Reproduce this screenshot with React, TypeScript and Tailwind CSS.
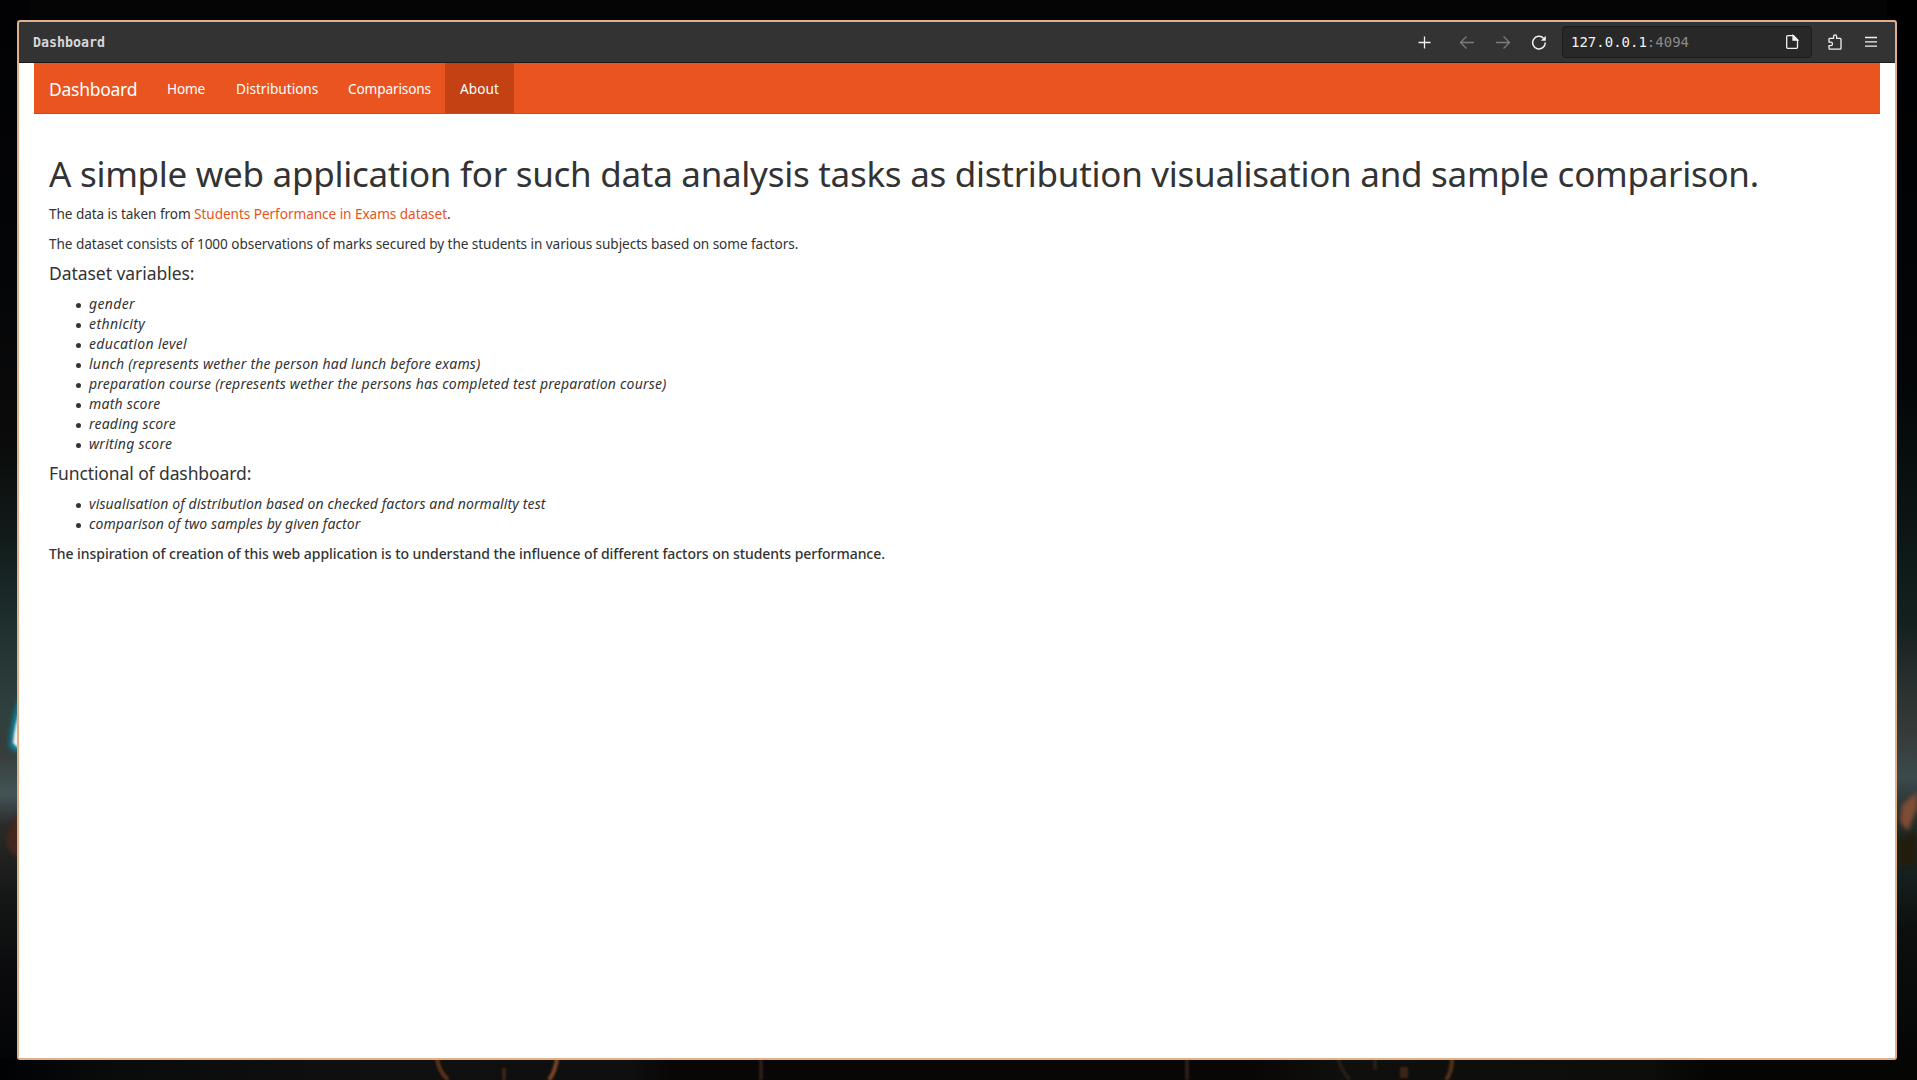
import type { ReactNode } from "react";

const variables = [
  { text: "gender", tracking: "tracking-[0.35px]" },
  { text: "ethnicity", tracking: "tracking-[0.41px]" },
  { text: "education level", tracking: "tracking-[0.35px]" },
  { text: "lunch (represents wether the person had lunch before exams)", tracking: "tracking-[0.21px]" },
  {
    text: "preparation course (represents wether the persons has completed test preparation course)",
    tracking: "tracking-[0.21px]",
  },
  { text: "math score", tracking: "tracking-[0.23px]" },
  { text: "reading score", tracking: "tracking-[0.2px]" },
  { text: "writing score", tracking: "tracking-[0.25px]" },
];

const features = [
  { text: "visualisation of distribution based on checked factors and normality test", tracking: "tracking-[0.13px]" },
  { text: "comparison of two samples by given factor", tracking: "tracking-[0.13px]" },
];

const links = [
  { text: "Home", box: "w-[68px] tracking-[-0.17px]" },
  { text: "Distributions", box: "w-28" },
  { text: "Comparisons", box: "w-28 tracking-[-0.12px]" },
  { text: "About", box: "w-[69px] bg-[#c34113] tracking-[0.08px]" },
];

/* Blurred desktop wallpaper visible around the window. */
function Wallpaper() {
  return (
    <svg className="absolute inset-0 h-full w-full" viewBox="0 0 1917 1080" preserveAspectRatio="none" aria-hidden="true">
      <defs>
        <linearGradient id="left" x1="0" y1="0" x2="0" y2="1">
          <stop offset="0" stopColor="#020204" />
          <stop offset=".25" stopColor="#040507" />
          <stop offset=".41" stopColor="#0b0b0b" />
          <stop offset=".5" stopColor="#111b1a" />
          <stop offset=".58" stopColor="#1f302f" />
          <stop offset=".66" stopColor="#30403e" />
          <stop offset=".7" stopColor="#373e3c" />
          <stop offset=".735" stopColor="#435457" />
          <stop offset=".765" stopColor="#2a2a28" />
          <stop offset=".83" stopColor="#151716" />
          <stop offset=".9" stopColor="#0b0b0d" />
          <stop offset="1" stopColor="#020305" />
        </linearGradient>
        <linearGradient id="right" x1="0" y1="0" x2="0" y2="1">
          <stop offset="0" stopColor="#000001" />
          <stop offset=".35" stopColor="#030506" />
          <stop offset=".5" stopColor="#0c1716" />
          <stop offset=".58" stopColor="#15211f" />
          <stop offset=".64" stopColor="#2a3230" />
          <stop offset=".68" stopColor="#363b39" />
          <stop offset=".72" stopColor="#3b4a4b" />
          <stop offset=".76" stopColor="#262b27" />
          <stop offset=".81" stopColor="#14201d" />
          <stop offset=".86" stopColor="#0d0f0f" />
          <stop offset="1" stopColor="#030304" />
        </linearGradient>
        <linearGradient id="bottom" x1="0" y1="0" x2="1" y2="0">
          <stop offset="0" stopColor="#010204" />
          <stop offset=".06" stopColor="#0a0b0b" />
          <stop offset=".2" stopColor="#0f100f" />
          <stop offset=".33" stopColor="#0e0f0e" />
          <stop offset=".35" stopColor="#090606" />
          <stop offset=".65" stopColor="#090606" />
          <stop offset=".7" stopColor="#0f100e" />
          <stop offset=".86" stopColor="#0d0e0c" />
          <stop offset=".89" stopColor="#050504" />
          <stop offset="1" stopColor="#050504" />
        </linearGradient>
        <filter id="soft" x="-50%" y="-50%" width="200%" height="200%">
          <feGaussianBlur stdDeviation="2.2" />
        </filter>
        <filter id="fine" filterUnits="userSpaceOnUse" x="0" y="600" width="1917" height="480">
          <feGaussianBlur stdDeviation="1.2" />
        </filter>
      </defs>
      <rect width="1917" height="1080" fill="#050506" />
      <rect width="30" height="1080" fill="url(#left)" />
      <rect x="1887" width="30" height="1080" fill="url(#right)" />
      <rect y="1058" width="1917" height="22" fill="url(#bottom)" />
      <path d="M20 695 Q12 712 9 745 Q13 753 20 752Z" fill="#087c96" filter="url(#soft)" />
      <path d="M20 710 Q15 722 13 743 L20 750Z" fill="#f6efe7" filter="url(#fine)" />
      <path d="M20 812 Q8 824 7 840 Q9 858 20 856Z" fill="#45261a" filter="url(#soft)" />
      <path d="M1917 792 L1902 805 L1900 822 L1908 831 L1917 808Z" fill="#7e4d35" filter="url(#soft)" />
      <path d="M1897 838 L1917 832 V862 L1897 868Z" fill="#221d10" filter="url(#soft)" />
      <g fill="none" stroke="#5f321c" strokeWidth="4" filter="url(#fine)">
        <path d="M437 1058 Q438 1070 448 1080" />
        <path d="M557 1058 Q556 1070 549 1080" stroke="#7c4426" />
        <path d="M504 1068 V1080" stroke="#3c2014" />
        <path d="M761 1058 V1080" stroke="#2e1a12" />
        <path d="M1187 1058 V1080" stroke="#2e1a12" />
        <path d="M1338 1058 Q1342 1072 1350 1080" stroke="#251c12" />
        <path d="M1375 1058 V1070" stroke="#2a1f13" />
        <path d="M1404 1067 V1078" stroke="#3d2416" strokeWidth="8" />
        <path d="M1452 1058 Q1452 1072 1446 1080" stroke="#56321c" />
      </g>
    </svg>
  );
}

function Icon({ children, className = "" }: { children: ReactNode; className?: string }) {
  return (
    <svg
      className={`size-4 shrink-0 ${className}`}
      viewBox="0 0 16 16"
      fill="none"
      stroke="currentColor"
      strokeWidth="1.3"
      aria-hidden="true"
    >
      {children}
    </svg>
  );
}

function Toolbar() {
  return (
    <header className="flex h-[41px] shrink-0 items-center border-b border-[#1a1a1a] bg-[#333333] pr-4 pl-3.5 text-[#f2f2f2]">
      <span className="flex-1 pt-0.5 font-['DejaVu_Sans_Mono',monospace] text-[13.3px] font-bold text-[#d6d6d6]">
        Dashboard
      </span>
      <Icon className="mr-[26px]">
        <path d="M7.500 2.500v12M1.500 8.500h12" />
      </Icon>
      <Icon className="mr-5 text-[#7c7c7c]">
        <path d="M15 8.500H1.500M7.500 2.500l-6 6 6 6" />
      </Icon>
      <Icon className="mr-5 text-[#7c7c7c]">
        <path d="M1 8.500h13.500M8.500 2.500l6 6-6 6" />
      </Icon>
      <Icon className="mr-[15px]">
        <path d="M14.300 8.600A6.300 6.300 0 1 1 12.600 4.300" strokeWidth="1.5" />
        <path d="M14.800 1.800v5h-5z" fill="currentColor" stroke="none" />
      </Icon>
      <div className="mr-[15px] flex h-8 w-[250px] items-center justify-between rounded-[4px] border border-[#1b1b1b] bg-[#282828] pr-[11px] pl-2 font-['DejaVu_Sans_Mono',monospace] text-[14px]">
        <span>
          127.0.0.1<span className="text-[#8a8a8a]">:4094</span>
        </span>
        <Icon>
          <path d="M3.700 1.700h5.800l4 4v7.600a1 1 0 0 1-1 1H3.700a1 1 0 0 1-1-1V2.700a1 1 0 0 1 1-1z" />
          <path d="M9 1.500v4.700h4.700z" fill="currentColor" />
        </Icon>
      </div>
      <Icon className="mr-5 overflow-visible">
        <path
          d="M4.400 4.300h2.200V2.300a1.500 1.500 0 0 1 3 0v2h3.500a.9.900 0 0 1 .9.900v9a.9.900 0 0 1-.9.900H2.900a.9.900 0 0 1-.9-.9V11.700h1.700a1.800 1.800 0 0 0 0-3.600H2V5.200a.9.900 0 0 1 .9-.9z"
          strokeLinejoin="round"
        />
      </Icon>
      <Icon>
        <path d="M2 3.500h12M2 7.800h12M2 12.100h12" />
      </Icon>
    </header>
  );
}

function ItemList({ items }: { items: { text: string; tracking: string }[] }) {
  return (
    <ul className="mb-2.5 pl-[27px] text-[14px] leading-5">
      {items.map((item) => (
        <li key={item.text} className="flex items-center before:mt-0.5 before:mr-[8px] before:size-[5px] before:rounded-full before:bg-[#333333]">
          <em className={item.tracking}>{item.text}</em>
        </li>
      ))}
    </ul>
  );
}

export default function App() {
  return (
    <div className="relative flex h-[1080px] w-full overflow-hidden bg-[#050506] pt-5 pr-5 pb-5 pl-[17px]">
      <Wallpaper />
      <div className="relative flex flex-1 flex-col overflow-hidden rounded-[3px] border-2 border-[#e0b08a] bg-white font-['Noto_Sans',sans-serif] whitespace-nowrap text-[#333333]">
        <Toolbar />
        <nav className="mx-[15px] flex h-[51px] shrink-0 border-b border-[#d34615] bg-[#e95420] text-[13.6px] leading-5 text-white">
          <a className="flex w-[118px] items-center pt-0.5 pl-[15px] text-[17.5px] tracking-[-0.27px]">Dashboard</a>
          {links.map((link) => (
            <a
              key={link.text}
              className={
                link.text === "Home"
                  ? `mr-px flex items-center pt-0.5 pl-[15px] ${link.box}`
                  : `flex items-center pt-0.5 pl-[15px] ${link.box}`
              }
            >
              {link.text}
            </a>
          ))}
        </nav>
        <main className="px-[30px] pt-10 text-[13.6px] leading-5">
          <h1 className="mb-2.5 text-[35px] leading-10 tracking-[-0.28px]">
            A simple web application for such data analysis tasks as distribution visualisation and sample comparison.
          </h1>
          <p className="mb-2.5 tracking-[-0.07px]">
            The data is taken from{" "}
            <a className="tracking-[-0.05px] text-[#e95420]">Students Performance in Exams dataset</a>.
          </p>
          <p className="mb-[9px] tracking-[-0.06px]">
            The dataset consists of 1000 observations of marks secured by the students in various subjects based on
            some factors.
          </p>
          <h4 className="mb-[11px] text-[17.5px] leading-5 tracking-[-0.05px]">Dataset variables:</h4>
          <ItemList items={variables} />
          <h4 className="-mt-px mb-[11px] text-[17.5px] leading-5 tracking-[-0.1px]">Functional of dashboard:</h4>
          <ItemList items={features} />
          <p className="text-[14px] font-medium tracking-[-0.054px]">
            The inspiration of creation of this web application is to understand the influence of different factors on
            students performance.
          </p>
        </main>
      </div>
    </div>
  );
}
